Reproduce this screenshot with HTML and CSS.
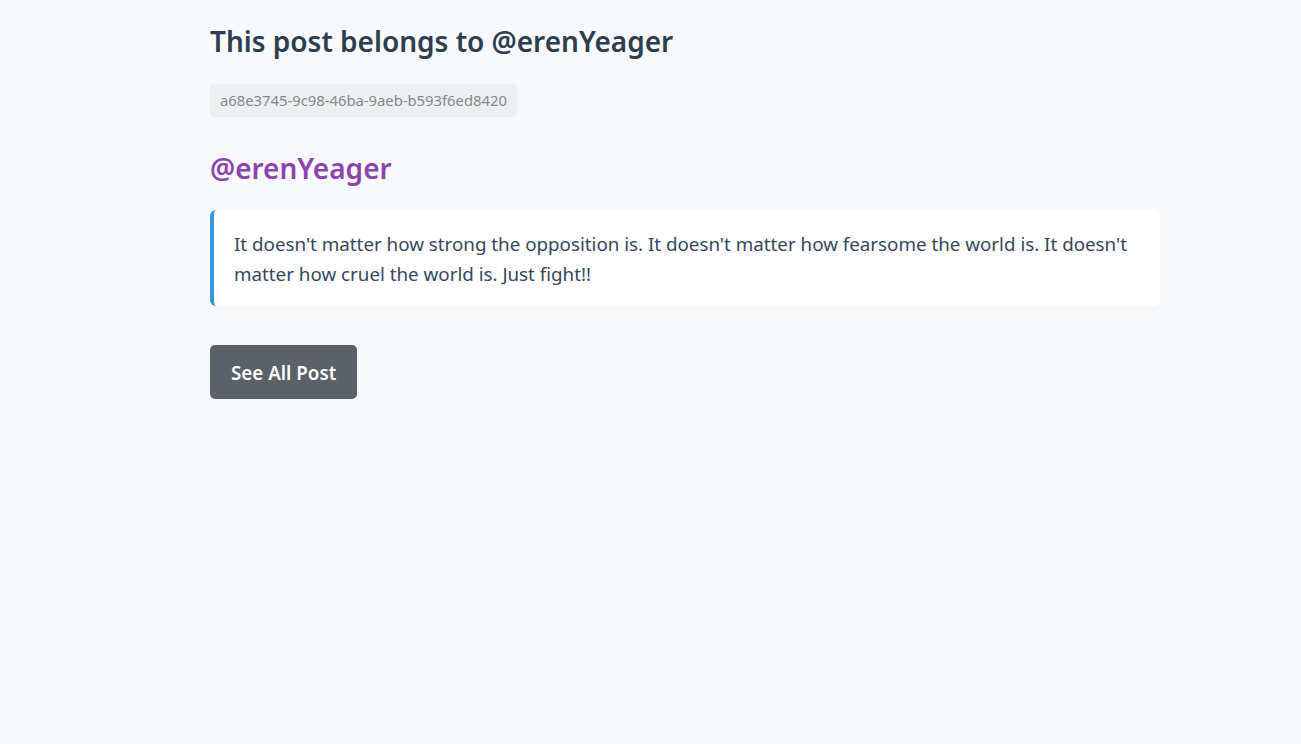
FILE: index.html
```html
<!DOCTYPE html>
<html lang="en">
<head>
<meta charset="utf-8">
<title>Post</title>
<link rel="stylesheet" href="styles.css">
</head>
<body>
<main class="page">
  <h1 class="title">This post belongs to @erenYeager</h1>
  <div class="id-row"><span class="post-id">a68e3745-9c98-46ba-9aeb-b593f6ed8420</span></div>
  <h2 class="author">@erenYeager</h2>
  <div class="quote-card">
    <p class="quote-text">It doesn't matter how strong the opposition is. It doesn't matter how fearsome the world is. It doesn't matter how cruel the world is. Just fight!!</p>
  </div>
  <a class="btn" href="#">See All Post</a>
</main>
</body>
</html>
```
FILE: styles.css
```css
html, body {
  margin: 0;
  padding: 0;
  background: #f8f9fa;
}
body {
  font-family: "Noto Sans", "Open Sans", sans-serif;
  color: #2c3e50;
}
.page {
  width: 950px;
  margin-left: 210px;
  padding-top: 23px;
  display: flex;
  flex-direction: column;
  align-items: flex-start;
}
.title {
  margin: 0;
  font-size: 28px;
  font-weight: 600;
  line-height: 36px;
  color: #2c3e50;
}
.id-row {
  margin-top: 25px;
}
.post-id {
  display: inline-block;
  background: #ecf0f1;
  color: #7f8c8d;
  font-size: 14.8px;
  line-height: 33px;
  height: 33px;
  padding: 0 10px;
  border-radius: 4px;
}
.author {
  margin: 33px 0 0;
  font-size: 28px;
  font-weight: 600;
  line-height: 36px;
  color: #8e44ad;
}
.quote-card {
  margin-top: 24px;
  align-self: stretch;
  background: #fff;
  border-left: 4px solid #3498db;
  border-radius: 6px;
  padding: 19px 24px 17px 20px;
}
.quote-text {
  margin: 0;
  font-size: 18.77px;
  line-height: 30px;
  color: #34495e;
}
.btn {
  margin-top: 39px;
  display: inline-block;
  background: #5a6168;
  color: #fff;
  text-decoration: none;
  font-size: 18.8px;
  font-weight: 600;
  line-height: 57px;
  height: 54px;
  padding: 0 21px 0 21px;
  border-radius: 5px;
}
```
